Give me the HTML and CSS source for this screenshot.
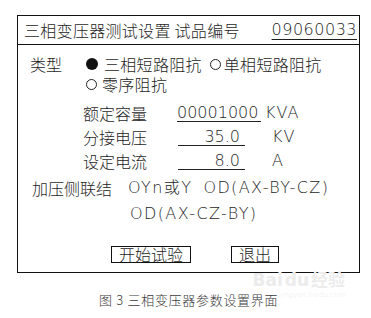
FILE: index.html
```html
<!DOCTYPE html>
<html lang="zh">
<head>
<meta charset="utf-8">
<title>三相变压器参数设置界面</title>
<link rel="stylesheet" href="styles.css">
</head>
<body>
<div class="page">
  <div class="panel">
    <div class="header">
      <span class="title">三相变压器测试设置 试品编号</span>
      <span class="serial">09060033</span>
    </div>
    <div class="content">
      <div class="row type-row">
        <span class="type-label">类型</span>
        <span class="radio filled"></span>
        <span class="opt-text">三相短路阻抗</span>
        <span class="radio small-gap"></span>
        <span class="opt-text">单相短路阻抗</span>
      </div>
      <div class="row type-row second">
        <span class="radio"></span>
        <span class="opt-text">零序阻抗</span>
      </div>

      <div class="param first">
        <span class="p-label">额定容量</span>
        <span class="p-field wide">00001000</span>
        <span class="p-unit">KVA</span>
      </div>
      <div class="param">
        <span class="p-label">分接电压</span>
        <span class="p-field narrow">35.0</span>
        <span class="p-unit far">KV</span>
      </div>
      <div class="param">
        <span class="p-label">设定电流</span>
        <span class="p-field narrow">8.0</span>
        <span class="p-unit far">A</span>
      </div>

      <div class="conn first">
        <span class="c-label">加压侧联结</span>
        <span class="c-opt">OYn或Y</span>
        <span class="c-opt second-opt">OD(AX-BY-CZ)</span>
      </div>
      <div class="conn">
        <span class="c-opt indent">OD(AX-CZ-BY)</span>
      </div>

      <div class="buttons">
        <span class="btn start">开始试验</span>
        <span class="btn quit">退出</span>
      </div>
    </div>
  </div>
  <div class="caption">图 3 三相变压器参数设置界面</div>
  <div class="watermark">
    <span class="wm-main">Bai<span class="wm-du">du</span>经验</span>
    <span class="wm-url">jingyan.baidu.com</span>
  </div>
</div>
</body>
</html>
```
FILE: styles.css
```css
html, body {
  margin: 0;
  padding: 0;
  background: #ffffff;
}

.page {
  position: relative;
  width: 371px;
  height: 318px;
  padding-top: 15px;
  box-sizing: border-box;
  font-family: "Noto Sans CJK SC", "DejaVu Sans", sans-serif;
  font-weight: 300;
  color: #1e1e1e;
}

.panel {
  margin-left: 17px;
  width: 343px;
  height: 258px;
  box-sizing: border-box;
  border: 1px solid #111;
}

.header {
  height: 28px;
  border-bottom: 1px solid #111;
  display: flex;
  align-items: center;
  justify-content: space-between;
  padding: 0 2px 0 6px;
  font-size: 16px;
  line-height: 20px;
}

.title {
  font-family: "Noto Sans CJK SC", sans-serif;
  letter-spacing: 0.3px;
}

.serial {
  font-family: "DejaVu Sans", sans-serif;
  font-weight: 200;
  font-size: 16px;
  text-decoration: underline;
  text-underline-offset: 4px;
  text-decoration-thickness: 1px;
  letter-spacing: 0.5px;
}

.content {
  padding-top: 9px;
  font-size: 16px;
}

.row {
  display: flex;
  align-items: center;
  height: 20px;
  line-height: 18px;
}

.type-row {
  padding-left: 12px;
}

.type-row.second {
  padding-left: 68px;
}

.type-label {
  width: 56px;
}

.radio {
  width: 11px;
  height: 11px;
  border: 1px solid #222;
  border-radius: 50%;
  box-sizing: border-box;
  margin-right: 5px;
}

.radio.filled {
  width: 12px;
  height: 12px;
  background: #111;
  border: none;
  margin-right: 6px;
}

.radio.small-gap {
  margin-left: 8px;
  margin-right: 3px;
}

.opt-text {
  letter-spacing: 0.3px;
}

.param {
  display: flex;
  align-items: center;
  height: 24px;
  line-height: 20px;
  padding-left: 65px;
}

.param.first {
  margin-top: 7px;
}

.p-label {
  width: 94px;
}

.p-field {
  font-family: "DejaVu Sans", sans-serif;
  font-weight: 200;
  font-size: 16px;
  border-bottom: 1px solid #222;
  height: 21px;
  padding-top: 2px;
  box-sizing: border-box;
  line-height: 20px;
  align-self: flex-start;
}

.p-field.wide {
  width: 84px;
  text-align: left;
}

.p-field.narrow {
  width: 67px;
  text-align: right;
  padding-right: 5px;
  margin-left: 1px;
}

.p-unit {
  font-family: "DejaVu Sans", sans-serif;
  font-weight: 200;
  margin-left: 4px;
  letter-spacing: 1px;
}

.p-unit.far {
  margin-left: 27px;
}

.conn {
  display: flex;
  align-items: center;
  height: 26px;
  line-height: 20px;
  padding-left: 14px;
}

.conn.first {
  margin-top: 2px;
}

.c-label {
  width: 96px;
}

.c-opt {
  font-family: "DejaVu Sans", "Noto Sans CJK SC", sans-serif;
  font-weight: 200;
  font-size: 16px;
  letter-spacing: 1.4px;
}

.c-opt.second-opt {
  margin-left: 11px;
}

.c-opt.indent {
  margin-left: 98px;
}

.buttons {
  display: flex;
  margin-top: 19px;
  padding-left: 93px;
}

.btn {
  display: block;
  border: 1px solid #111;
  height: 17px;
  box-sizing: border-box;
  line-height: 15px;
  font-size: 16px;
  text-align: center;
}

.btn.start {
  width: 80px;
}

.btn.quit {
  width: 48px;
  margin-left: 40px;
}

.caption {
  margin-top: 19px;
  padding-left: 99px;
  font-family: "Noto Sans CJK SC", serif;
  font-weight: 300;
  font-size: 13px;
  letter-spacing: 0.7px;
  line-height: 16px;
  color: #3a3a3a;
}

.watermark {
  position: absolute;
  right: 26px;
  top: 270px;
  display: flex;
  flex-direction: column;
  align-items: flex-end;
  white-space: nowrap;
  color: #ececec;
  font-family: "DejaVu Sans", "Noto Sans CJK SC", sans-serif;
}

.wm-main {
  font-size: 17px;
  font-weight: bold;
  line-height: 20px;
}

.wm-du {
  margin: 0 2px;
}

.wm-url {
  font-size: 7px;
  line-height: 10px;
}
```
